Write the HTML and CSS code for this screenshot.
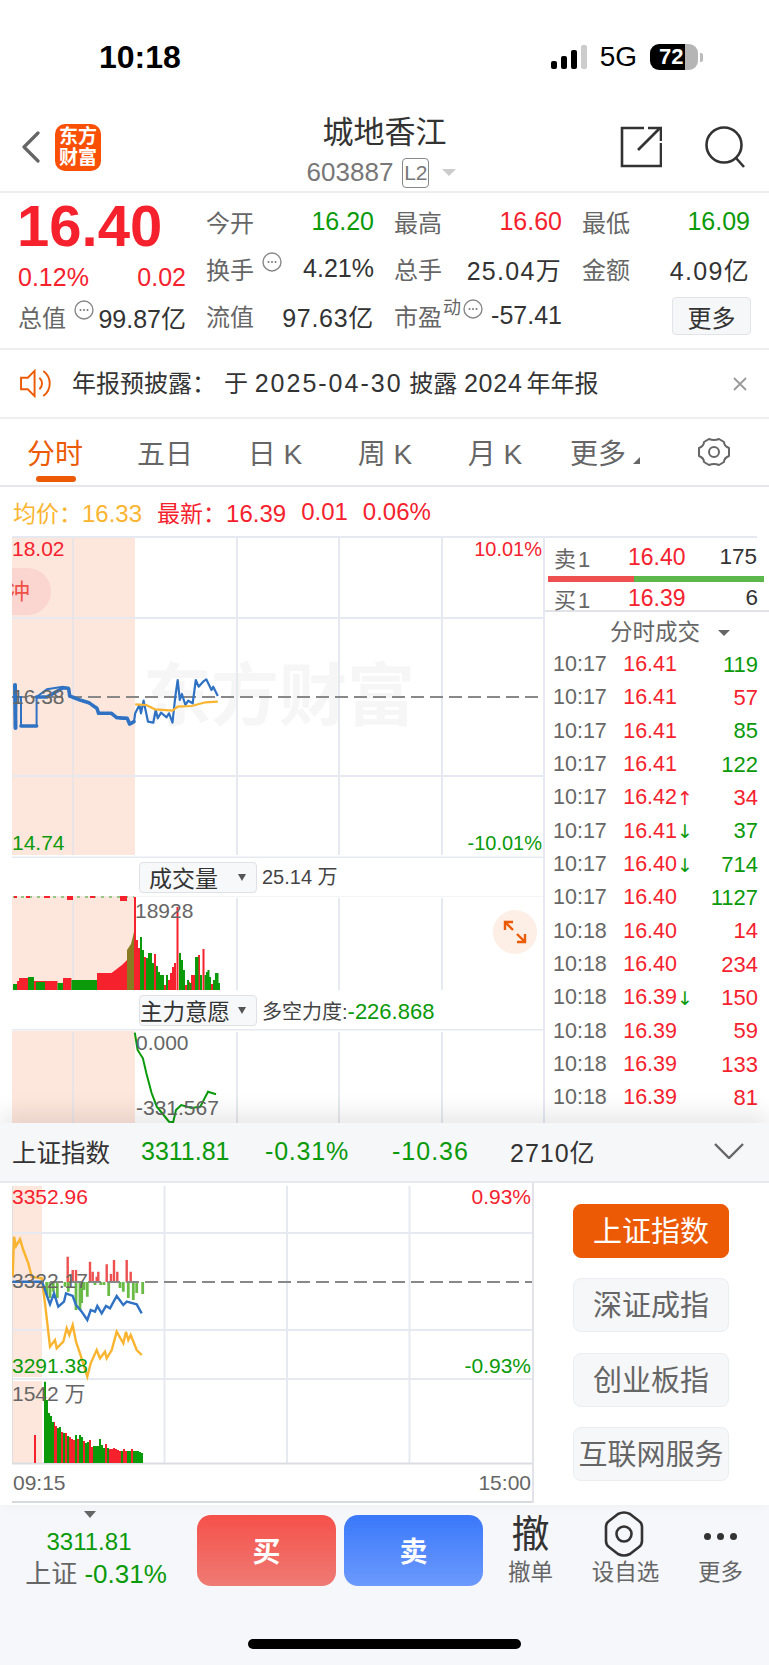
FILE: index.html
```html
<!DOCTYPE html>
<html lang="zh-CN">
<head>
    <meta charset="UTF-8">
    <meta name="viewport" content="width=device-width, initial-scale=1.0">
    <title>城地香江</title>
    <link rel="stylesheet" href="styles.css">
</head>
<body>
    <svg class="defs" width="0" height="0">
        <symbol id="more-dots" viewBox="0 0 20 20">
            <circle cx="10" cy="10" r="9" fill="none" stroke="#888" stroke-width="1.4"/>
            <circle cx="6.5" cy="10" r="1" fill="#777"/>
            <circle cx="10" cy="10" r="1" fill="#777"/>
            <circle cx="13.5" cy="10" r="1" fill="#777"/>
        </symbol>
    </svg>

    <!-- Status bar -->
    <div class="status-bar">
        <span class="clock">10:18</span>
        <div class="status-right">
            <div class="signal">
                <i class="s1"></i><i class="s2"></i><i class="s3"></i><i class="s4"></i>
            </div>
            <span class="net">5G</span>
            <div class="battery"><span>72</span></div>
            <i class="battery-nub"></i>
        </div>
    </div>

    <!-- Header -->
    <div class="nav">
        <div class="nav-left">
            <svg class="back" viewBox="0 0 20 32"><path d="M17 2 L3 16 L17 30" fill="none" stroke="#666" stroke-width="3.2" stroke-linecap="round" stroke-linejoin="round"/></svg>
            <div class="logo">东方<br>财富</div>
        </div>
        <div class="nav-title">
            <div class="stock-name">城地香江</div>
            <div class="stock-code">603887<span class="l2">L2</span><i class="code-arrow"></i></div>
        </div>
        <div class="nav-right">
            <svg class="nav-icon" viewBox="0 0 42 42" fill="none" stroke="#333" stroke-width="2.6"><path d="M24 2 H2 V40 H41 V17"/><path d="M18 24 L40 2"/><path d="M28 2 H41 V15"/></svg>
            <svg class="nav-icon" viewBox="0 0 42 42" fill="none" stroke="#333" stroke-width="2.6"><circle cx="20" cy="19" r="17.5"/><path d="M32 32 L40 41"/></svg>
        </div>
    </div>

    <!-- Quote -->
    <div class="quote">
        <div class="quote-main">
            <div class="last-price">16.40</div>
            <div class="change-row"><span>0.12%</span><span>0.02</span></div>
            <div class="cap-row">
                <span class="lbl">总值</span><svg class="dots"><use href="#more-dots"/></svg><span class="val">99.87亿</span>
            </div>
        </div>
        <div class="stats">
            <div class="stat"><span class="lbl">今开</span><span class="down">16.20</span></div>
            <div class="stat"><span class="lbl">最高</span><span class="up">16.60</span></div>
            <div class="stat"><span class="lbl">最低</span><span class="down">16.09</span></div>
            <div class="stat"><span class="lbl">换手<svg class="dots"><use href="#more-dots"/></svg></span><span class="val">4.21%</span></div>
            <div class="stat"><span class="lbl">总手</span><span class="val wide">25.04万</span></div>
            <div class="stat"><span class="lbl">金额</span><span class="val wide">4.09亿</span></div>
            <div class="stat"><span class="lbl">流值</span><span class="val wide-s">97.63亿</span></div>
            <div class="stat"><span class="lbl">市盈<sup class="dyn">动</sup><svg class="dots"><use href="#more-dots"/></svg></span><span class="val">-57.41</span></div>
            <div class="stat stat-end"><button class="more-btn">更多</button></div>
        </div>
    </div>

    <!-- Notice -->
    <div class="notice">
        <svg class="speaker" viewBox="0 0 34 30" fill="none" stroke="#ec5a05" stroke-width="2"><path d="M1 9 H8 L15 2 V28 L8 21 H1 Z"/><path d="M20 9 a8 8 0 0 1 0 12"/><path d="M24 2 a16 16 0 0 1 0 26"/></svg>
        <div class="notice-text">年报预披露：<span class="notice-yu">于</span> <span class="num">2025-04-30</span> 披露 <span class="num-s">2024</span> 年年报</div>
        <svg class="close" viewBox="0 0 16 16" stroke="#999" stroke-width="1.8"><path d="M2 2 L14 14 M14 2 L2 14"/></svg>
    </div>

    <!-- Period tabs -->
    <div class="tabs">
        <div class="tab active">分时</div>
        <div class="tab">五日</div>
        <div class="tab">日 K</div>
        <div class="tab">周 K</div>
        <div class="tab">月 K</div>
        <div class="tab tab-more">更多<i></i></div>
        <div class="tab">
            <svg class="gear" viewBox="0 0 32 30" fill="none" stroke="#666" stroke-width="2" stroke-linejoin="round"><path d="M11 2 Q16 4 21 2 L26 5 Q26 9 31 11 V19 Q26 21 26 25 L21 28 Q16 26 11 28 L6 25 Q6 21 1 19 V11 Q6 9 6 5 Z"/><circle cx="16" cy="15" r="5"/></svg>
        </div>
    </div>

    <div class="avg-row">
        <span class="avg"><span class="avg-lbl">均价：</span>16.33</span>
        <span class="up"><span class="avg-lbl">最新：</span>16.39</span>
        <span class="up">0.01</span>
        <span class="up">0.06%</span>
    </div>

    <!-- Intraday section -->
    <div class="market">
        <div class="chart-col">
            <div class="chart price-chart">
                <div class="watermark">东方财富</div>
                <svg viewBox="12 536 531 322" width="531" height="322">
                    <rect x="12" y="538" width="123" height="317" fill="#fde6dc"/>
                    <g stroke="#e7e9f0" stroke-width="2">
                        <path d="M12 537 H543 M12 618 H543 M12 776 H543 M12 857.5 H543"/>
                        <path d="M237 538 V855 M339 538 V855 M442 538 V855"/>
                        <path d="M73 538 V855" stroke="#ece4e4"/>
                    </g>
                    <path d="M12 697 H543" stroke="#888" stroke-width="2" stroke-dasharray="13 6"/>
                    <path d="M15 685 L15.5 728" fill="none" stroke="#2f72c4" stroke-width="4" stroke-linecap="round"/>
                    <path d="M15 685 L15.7 728 L16.4 697 H21 V726 H36.6 V697 L47 689.3 L62.7 686.7 L68.6 688.3 L69.7 696 L80 700 L88.9 702.7 L96.9 708.3 L98.6 713.3 H111.5 L116.7 717.7 L127.2 718.3 L129.6 724 L134 721.7" fill="none" stroke="#2f72c4" stroke-width="2"/>
                    <path d="M36.6 697 H47 L62.7 688 L68.6 688.3 L69.7 696 L80 700 L88.9 702.7 L96.9 708.3 L98.6 713.3 H111.5 L116.7 717.7 L127.2 718.3 L129.6 724 L134 721.7 M21 726 H36.6" fill="none" stroke="#2f72c4" stroke-width="3.6" stroke-linejoin="round" stroke-linecap="round" stroke-dasharray="4 1"/>
                    <path d="M134 721.7 L135.2 713.3 L139.4 705 L141 713.3 L143.6 700.7 L148 721.7 L153.3 722.7 L155.7 710 L157.8 718.3 L161 712.7 L166.6 717.3 L169 713.3 L172.5 722.7 L175.3 696.7 L177.7 680 L179.8 700 L181.9 694 L185.4 705 L188.2 700.7 L192.7 703.3 L195.8 680 L198.6 686.7 L203.1 681.7 L206.3 679.3 L211.5 690 L213.2 686.7 L217.8 696" fill="none" stroke="#2f72c4" stroke-width="2.2" stroke-linejoin="round"/>
                    <path d="M135.2 704.3 L146.3 705 L155 709.3 L172.5 710.7 L177.7 706.7 L191.6 706 L205.6 702.3 L217.8 701.7" fill="none" stroke="#fbb430" stroke-width="2.2"/>
                </svg>
                <span class="tag up tl">18.02</span>
                <span class="tag up tr">10.01%</span>
                <span class="tag mid-label">16.38</span>
                <span class="tag down bl">14.74</span>
                <span class="tag down br">-10.01%</span>
                <div class="auction-pill"><span>冲</span></div>
            </div>

            <div class="sub-head">
                <div class="sel-btn">成交量<i></i></div>
                <span class="sub-val vol-val">25.14 万</span>
            </div>
            <div class="chart vol-chart">
                <svg viewBox="12 896 531 95" width="531" height="95">
                    <rect x="12" y="896" width="123" height="94" fill="#fde6dc"/>
                    <g stroke="#e7e9f0" stroke-width="2">
                        <path d="M12 895.5 H543"/>
                        <path d="M237 898 V990 M339 898 V990 M442 898 V990"/>
                        <path d="M73 898 V990" stroke="#ece4e4"/>
                    </g>
                    <path d="M13 897 H134" stroke="#36a52f" stroke-width="1" stroke-dasharray="3 5"/>
                    <path d="M14 896 h3 v2 h-3z M26 896 h4 v2 h-4z M44 896 h6 v2 h-6z M67 896 h6 v4 h-6z M90 896 h5 v2 h-5z M120 896 h7 v5 h-7z" fill="#f5222d"/>
                    <!-- left block before open -->
                    <path d="M17 990 V981 H19 V978 H28 V990 Z M34 990 V981 H57.5 V990 Z M63 990 V978 H71.4 V990 Z M97 990 V973 H111.5 L122 965 V990 Z M122 990 V965 L127 960 V990 Z" fill="#f5222d"/>
                    <path d="M13 990 V984 H17 V990 Z M28 990 V977 H34 V990 Z M36 990 V982 H45 V990 Z M57.5 990 V983 H63 V990 Z M71.4 990 V980 H97 V990 Z" fill="#0a9a0a"/>
                    <path d="M127 990 V950 L131 944 L134 932 V990 Z" fill="#8a7a20"/>
                    <path d="M135 897 V990 M137 940 V990 M139 948 V990 M145 957 V990 M155 954 V990 M165 985 V990 M169 980 V990 M171 973 V990 M173 967 V990 M175 963 V990 M177.5 907 V990 M186 985 V990 M189 982 V990 M192 975 V990 M194 975 V990 M199 955 V990 M203.5 949 V990 M212 984 V990" stroke="#f5222d" stroke-width="2" fill="none"/>
                    <path d="M141 937 V990 M143 950 V990 M147 958 V990 M149 953 V990 M151 953 V990 M153 963 V990 M157 966 V990 M159 972 V990 M161 975 V990 M163 975 V990 M167 975 V990 M180 953 V990 M182 960 V990 M184 970 V990 M188 980 V990 M190.5 983 V990 M196 957 V990 M197.5 957 V990 M201 975 V990 M205.5 975 V990 M207 972 V990 M208.5 970 V990 M210 977 V990 M214 980 V990 M216 973 V990 M217.5 973 V990 M219 983 V990" stroke="#0a9a0a" stroke-width="2" fill="none"/>
                </svg>
                <span class="tag vol-max">18928</span>
                <div class="expand-btn">
                    <svg viewBox="0 0 26 26" fill="none" stroke="#ec5a05" stroke-width="2.4"><path d="M3 11 V3 H11 M3 3 L11 11"/><path d="M23 15 V23 H15 M23 23 L15 15"/></svg>
                </div>
            </div>

            <div class="sub-head">
                <div class="sel-btn sel-tight">主力意愿<i></i></div>
                <span class="sub-val">多空力度:<span class="down sub-num">-226.868</span></span>
            </div>
            <div class="chart intent-chart">
                <svg viewBox="12 1029 531 94" width="531" height="94">
                    <rect x="12" y="1031" width="123" height="92" fill="#fde6dc"/>
                    <g stroke="#e7e9f0" stroke-width="2">
                        <path d="M12 1029.5 H543"/>
                        <path d="M237 1032 V1123 M339 1032 V1123 M442 1032 V1123"/>
                        <path d="M73 1032 V1123" stroke="#ece4e4"/>
                    </g>
                    <path d="M134.8 1032.7 L137.6 1050 L142.9 1058.3 L146.3 1073 L151.6 1093 L156.8 1106.7 L162 1113 L169 1121.7 L173.2 1122 L176 1110 L181.2 1105 L191.6 1108 L200.3 1106.7 L208 1091.7 L216 1094.3" fill="none" stroke="#0a9a0a" stroke-width="2"/>
                </svg>
                <span class="tag intent-top">0.000</span>
                <span class="tag intent-low">-331.567</span>
            </div>
        </div>

        <div class="side-col">
            <div class="book-row book-ask">
                <span class="book-lbl">卖1</span><span class="up book-price">16.40</span><span class="book-qty">175</span>
            </div>
            <div class="book-bar"><i class="bar-red"></i><i class="bar-green"></i></div>
            <div class="book-row book-bid">
                <span class="book-lbl">买1</span><span class="up book-price">16.39</span><span class="book-qty">6</span>
            </div>
            <div class="trade-head">分时成交<i></i></div>
            <div class="trades">
                <div class="trade"><span class="t">10:17</span><span class="p">16.41</span><span class="a"></span><span class="q down">119</span></div>
                <div class="trade"><span class="t">10:17</span><span class="p">16.41</span><span class="a"></span><span class="q up">57</span></div>
                <div class="trade"><span class="t">10:17</span><span class="p">16.41</span><span class="a"></span><span class="q down">85</span></div>
                <div class="trade"><span class="t">10:17</span><span class="p">16.41</span><span class="a"></span><span class="q down">122</span></div>
                <div class="trade"><span class="t">10:17</span><span class="p">16.42</span><span class="a up">↑</span><span class="q up">34</span></div>
                <div class="trade"><span class="t">10:17</span><span class="p">16.41</span><span class="a down">↓</span><span class="q down">37</span></div>
                <div class="trade"><span class="t">10:17</span><span class="p">16.40</span><span class="a down">↓</span><span class="q down">714</span></div>
                <div class="trade"><span class="t">10:17</span><span class="p">16.40</span><span class="a"></span><span class="q down">1127</span></div>
                <div class="trade"><span class="t">10:18</span><span class="p">16.40</span><span class="a"></span><span class="q up">14</span></div>
                <div class="trade"><span class="t">10:18</span><span class="p">16.40</span><span class="a"></span><span class="q up">234</span></div>
                <div class="trade"><span class="t">10:18</span><span class="p">16.39</span><span class="a down">↓</span><span class="q up">150</span></div>
                <div class="trade"><span class="t">10:18</span><span class="p">16.39</span><span class="a"></span><span class="q up">59</span></div>
                <div class="trade"><span class="t">10:18</span><span class="p">16.39</span><span class="a"></span><span class="q up">133</span></div>
                <div class="trade"><span class="t">10:18</span><span class="p">16.39</span><span class="a"></span><span class="q up">81</span></div>
            </div>
        </div>
    </div>

    <!-- Index panel -->
    <div class="index-panel">
        <div class="index-head">
            <span class="index-name">上证指数</span>
            <span class="down idx-a">3311.81</span>
            <span class="down idx-b">-0.31%</span>
            <span class="down idx-c">-10.36</span>
            <span class="idx-d">2710亿</span>
            <svg class="chevron" viewBox="0 0 30 16" fill="none" stroke="#666" stroke-width="2.4"><path d="M1 1 L15 15 L29 1"/></svg>
        </div>
        <div class="index-body">
            <div class="chart index-chart">
                <svg viewBox="12 1183 520 320" width="520" height="320">
                    <rect x="12" y="1186" width="30" height="191" fill="#fde6dc"/>
                    <rect x="12" y="1381" width="30" height="82" fill="#fde6dc"/>
                    <g stroke="#e7e9f0" stroke-width="2">
                        <path d="M164.5 1186 V1463 M287 1186 V1463 M409.5 1186 V1463"/>
                        <path d="M12 1233 H532 M12 1330 H532 M12 1379 H532"/>
                    </g>
                    <path d="M12.5 1186 V1463" stroke="#e3dede" stroke-width="1"/>
                    <path d="M12 1463.5 H532" stroke="#dcdde2" stroke-width="2"/>
                    <path d="M12 1502 H532" stroke="#d8d9de" stroke-width="2"/>
                    <path d="M67.7 1282 V1256.7 M72.7 1282 V1270 M76 1282 V1270 M90 1282 V1261.7 M92.7 1282 V1271.7 M96.7 1282 V1276.7 M98.3 1282 V1271.7 M106.7 1282 V1264.3 M111 1282 V1274 M114 1282 V1260 M117.3 1282 V1271.7 M126.7 1282 V1260 M130.7 1282 V1271.7" stroke="#ee5050" stroke-width="2.4"/>
                    <path d="M46.7 1282 V1295 M50 1282 V1298 M53.3 1282 V1291.7 M57.3 1282 V1298 M65 1282 V1286.7 M68.3 1282 V1291.7 M76 1282 V1310 M80 1282 V1310 M81.7 1282 V1303 M84 1282 V1290 M87.3 1282 V1296.7 M95 1282 V1285 M100.7 1282 V1285 M104 1282 V1285 M108.7 1282 V1296 M120 1282 V1288 M123.3 1282 V1291.7 M128.3 1282 V1298 M133.3 1282 V1300 M136.7 1282 V1293 M142.7 1282 V1294" stroke="#6abb46" stroke-width="2.8"/>
                    <path d="M12 1282 H532" stroke="#888" stroke-width="2" stroke-dasharray="13 6"/>
                    <path d="M12.7 1276.7 L14 1236.7 L16 1246 L20 1239.3 L23.3 1250 L28.3 1263.3 L31.7 1276.7 L41.7 1278.3 L45 1303.3 L50 1346.7 L55 1340 L56.7 1348.3 L63.3 1341.7 L66.7 1328.3 L69.3 1335 L72.7 1325 L76 1341.7 L80 1353.3 L87.3 1376.7 L90.7 1363.3 L96.7 1350 L100 1358.3 L105 1351.7 L106.7 1358.3 L111.7 1350 L116.7 1331.7 L123.3 1343.3 L126 1331.7 L128.3 1340 L130.7 1335 L136.7 1350 L141.7 1355" fill="none" stroke="#fbb430" stroke-width="2.4"/>
                    <path d="M12.7 1281.7 H41.7 L43.3 1285 L46.7 1295 L50 1304.3 L54 1293.3 L58.3 1306.7 L64 1301.7 L66 1293.3 L72.7 1296 L76 1305 L81.7 1311.7 L87.3 1320 L90.7 1310 L95 1311.7 L97.3 1306 L101.7 1313.3 L106 1306 L110 1308.3 L116.7 1296 L123.3 1305 L126.7 1301.7 L136.7 1304.3 L141.7 1313.3" fill="none" stroke="#2f72c4" stroke-width="2.4"/>
                    <path d="M35 1463 V1435 M54 1463 V1422 M56 1463 V1426 M62 1463 V1432 M66 1463 V1433 M70 1463 V1437 M72 1463 V1439 M74 1463 V1440 M78 1463 V1439 M84 1463 V1441 M90 1463 V1440 M92 1463 V1447 M106 1463 V1444 M110 1463 V1449 M112 1463 V1449 M114 1463 V1448 M116 1463 V1449 M118 1463 V1450 M120 1463 V1451 M124 1463 V1449 M126 1463 V1451 M132 1463 V1449" stroke="#f5222d" stroke-width="2"/>
                    <path d="M45 1463 V1381.7 M47 1463 V1400 M49 1463 V1413 M51 1463 V1416 M53 1463 V1422 M58 1463 V1428 M60 1463 V1427 M64 1463 V1433 M68 1463 V1436 M76 1463 V1435 M80 1463 V1435 M82 1463 V1437 M86 1463 V1443 M88 1463 V1442 M94 1463 V1446 M96 1463 V1446 M98 1463 V1446 M100 1463 V1439 M102 1463 V1445 M104 1463 V1448 M108 1463 V1448 M122 1463 V1451 M128 1463 V1451 M130 1463 V1451 M134 1463 V1451 M136 1463 V1451 M138 1463 V1451 M140 1463 V1452 M142 1463 V1453" stroke="#0a9a0a" stroke-width="2"/>
                </svg>
                <span class="tag up idx-high">3352.96</span>
                <span class="tag up idx-high-pct">0.93%</span>
                <span class="tag idx-mid">3322.17</span>
                <span class="tag down idx-low">3291.38</span>
                <span class="tag down idx-low-pct">-0.93%</span>
                <span class="tag idx-vol">1542 万</span>
                <span class="tag idx-start">09:15</span>
                <span class="tag idx-end">15:00</span>
            </div>
            <div class="index-btns">
                <div class="idx-btn active">上证指数</div>
                <div class="idx-btn">深证成指</div>
                <div class="idx-btn">创业板指</div>
                <div class="idx-btn">互联网服务</div>
            </div>
        </div>
    </div>

    <!-- Bottom bar -->
    <div class="bottom">
        <div class="bottom-row">
            <div class="mini-quote">
                <i class="mini-arrow"></i>
                <div class="down mini-price">3311.81</div>
                <div class="mini-line"><span class="mini-name">上证</span> <span class="down">-0.31%</span></div>
            </div>
            <div class="trade-btn buy">买</div>
            <div class="trade-btn sell">卖</div>
            <div class="action">
                <div class="action-top cancel">撤</div>
                <div class="action-lbl">撤单</div>
            </div>
            <div class="action">
                <div class="action-top">
                    <svg class="hex" viewBox="0 0 40 46" fill="none" stroke="#333" stroke-width="2.6" stroke-linejoin="round"><path d="M14 3 Q20 0 26 3 L35 10 Q38 12 38 16 V30 Q38 34 35 36 L26 43 Q20 46 14 43 L5 36 Q2 34 2 30 V16 Q2 12 5 10 Z"/><circle cx="20" cy="23" r="7.5"/></svg>
                </div>
                <div class="action-lbl">设自选</div>
            </div>
            <div class="action">
                <div class="action-top dots-row"><i></i><i></i><i></i></div>
                <div class="action-lbl">更多</div>
            </div>
        </div>
        <div class="home-bar"></div>
    </div>
</body>
</html>
```

FILE: styles.css
```css
* {
    box-sizing: border-box;
}

body {
    margin: 0;
    width: 769px;
    height: 1665px;
    overflow: hidden;
    background: white;
    color: #333;
    font-family: "Liberation Sans", "Noto Sans CJK SC", sans-serif;
}

i {
    display: block;
}

.defs {
    position: absolute;
}

.up {
    color: #f5222d;
}

.down {
    color: #0a9a0a;
}

/* Status bar */
.status-bar {
    height: 100px;
    padding: 41px 0 0 99px;
    display: flex;
    justify-content: space-between;
    align-items: flex-start;
}

.clock {
    font-size: 32px;
    line-height: 32px;
    font-weight: bold;
    color: #000;
}

.status-right {
    display: flex;
    align-items: center;
    height: 32px;
    padding-right: 66px;
}

.signal {
    display: flex;
    align-items: flex-end;
    gap: 4px;
    height: 24px;
}

.signal i {
    width: 6px;
    background: #000;
    border-radius: 2px;
}

.s1 { height: 8px; }
.s2 { height: 13px; }
.s3 { height: 19px; }
.signal .s4 { height: 24px; background: #ccc; }

.net {
    margin-left: 13px;
    font-size: 28px;
    color: #000;
}

.battery {
    margin-left: 13px;
    width: 48px;
    height: 26px;
    border-radius: 9px;
    background: linear-gradient(90deg, #000 72%, #b5b5b5 72%);
    color: white;
    font-size: 22px;
    font-weight: bold;
    line-height: 26px;
    padding-left: 9px;
}

.battery-nub {
    width: 3px;
    height: 9px;
    margin-left: 2px;
    background: #bbb;
    border-radius: 0 2px 2px 0;
}

/* Header */
.nav {
    height: 93px;
    display: grid;
    grid-template-columns: 1fr auto 1fr;
    border-bottom: 2px solid #eeeeee;
}

.nav-left {
    display: flex;
    align-items: center;
    padding-left: 21px;
    padding-top: 2px;
}

.back {
    width: 20px;
    height: 32px;
}

.logo {
    margin-left: 14px;
    width: 46px;
    height: 47px;
    background: #fa5006;
    border-radius: 10px;
    color: white;
    font-size: 19px;
    font-weight: bold;
    line-height: 21px;
    text-align: center;
    padding-top: 2px;
}

.nav-title {
    text-align: center;
    padding-top: 13px;
}

.stock-name {
    font-size: 31px;
    line-height: 40px;
    color: #333;
}

.stock-code {
    display: flex;
    align-items: center;
    justify-content: center;
    height: 39px;
    padding-right: 6px;
    font-size: 26px;
    color: #777;
}

.l2 {
    margin-left: 9px;
    width: 27px;
    height: 30px;
    border: 1px solid #888;
    border-radius: 4px;
    font-size: 21px;
    line-height: 28px;
    text-align: center;
}

.code-arrow {
    margin-left: 13px;
    border-style: solid;
    border-width: 7px 7px 0;
    border-color: #ccc transparent transparent;
}

.nav-right {
    display: flex;
    justify-content: flex-end;
    align-items: center;
    gap: 42px;
    padding-right: 23px;
    padding-top: 2px;
}

.nav-icon {
    width: 42px;
    height: 42px;
}

/* Quote */
.quote {
    height: 157px;
    padding-left: 18px;
    display: flex;
    gap: 20px;
    border-bottom: 2px solid #eeeeee;
}

.quote-main {
    width: 168px;
}

.last-price {
    height: 65px;
    margin-left: -1px;
    line-height: 65px;
    font-size: 58px;
    font-weight: bold;
    color: #f5222d;
}

.change-row {
    display: flex;
    justify-content: space-between;
    height: 38px;
    line-height: 38px;
    font-size: 25px;
    color: #f5222d;
}

.cap-row {
    display: flex;
    align-items: center;
    height: 41px;
    font-size: 24px;
}

.cap-row .val {
    margin-left: auto;
    font-size: 25px;
    white-space: nowrap;
}

.lbl {
    display: flex;
    align-items: center;
    font-size: 24px;
    color: #666;
    white-space: nowrap;
}

.val {
    color: #333;
}

.wide {
    letter-spacing: 1.3px;
}

.wide-s {
    letter-spacing: 0.7px;
}

.dots {
    width: 20px;
    height: 20px;
    margin: -14px 0 0 8px;
    flex-shrink: 0;
}

.cap-row .dots {
    width: 20px;
    margin-left: 8px;
}

.dyn {
    font-size: 18px;
    line-height: 18px;
    margin: -16px 0 0 1px;
}

.dyn + .dots {
    margin-left: 2px;
}

.stats {
    display: grid;
    grid-template-columns: repeat(3, 168px);
    grid-auto-rows: 47px;
    column-gap: 20px;
    padding-top: 5px;
}

.stat {
    display: flex;
    justify-content: space-between;
    align-items: center;
    font-size: 25px;
    white-space: nowrap;
}

.stat-end {
    justify-content: flex-end;
}

.more-btn {
    width: 79px;
    height: 38px;
    padding: 0;
    margin-top: 1px;
    margin-right: -1px;
    background: #f6f7f9;
    border: 1px solid #e3e4e8;
    border-radius: 4px;
    font-family: inherit;
    font-size: 24px;
    color: #333;
}

/* Notice */
.notice {
    height: 69px;
    display: flex;
    align-items: center;
    padding-left: 20px;
    border-bottom: 2px solid #eeeeee;
}

.speaker {
    width: 33px;
    height: 29px;
}

.notice-text {
    margin: -4px 0 0 19px;
    font-size: 24px;
    color: #333;
    white-space: nowrap;
}

.notice-yu {
    margin-left: 8px;
}

.num {
    font-size: 25px;
    letter-spacing: 2px;
}

.num-s {
    font-size: 25px;
    letter-spacing: 0.8px;
    margin-right: -3px;
}

.close {
    width: 16px;
    height: 16px;
    margin-left: auto;
    margin-right: 21px;
}

/* Tabs */
.tabs {
    height: 68px;
    display: flex;
    border-bottom: 2px solid #e6e6ec;
}

.tab {
    position: relative;
    width: 110px;
    flex-shrink: 0;
    height: 66px;
    padding-top: 16px;
    text-align: center;
    font-size: 28px;
    line-height: 40px;
    color: #666;
    white-space: nowrap;
}

.tab.active {
    color: #ec5a05;
}

.tab.active::after {
    content: "";
    position: absolute;
    left: 36px;
    top: 57px;
    width: 40px;
    height: 6px;
    border-radius: 3px;
    background: #ec5a05;
}

.tab-more i {
    display: inline-block;
    margin-left: 7px;
    border-style: solid;
    border-width: 0 0 7px 7px;
    border-color: transparent transparent #666;
}

.gear {
    width: 32px;
    height: 30px;
    margin-top: 2px;
    margin-left: -3px;
}

.avg-row {
    height: 49px;
    padding: 0 0 0 13px;
    display: flex;
    align-items: center;
    gap: 15px;
    font-size: 24px;
}

.avg-lbl {
    font-size: 23px;
}

.avg {
    color: #fbb430;
}

/* Intraday section */
.market {
    height: 587px;
    padding-left: 12px;
    display: flex;
}

.chart-col {
    width: 531px;
    flex-shrink: 0;
}

.chart {
    position: relative;
    overflow: hidden;
}

.chart svg {
    display: block;
}

.price-chart {
    height: 322px;
}

.vol-chart {
    height: 95px;
}

.intent-chart {
    height: 94px;
}

.watermark {
    position: absolute;
    left: 131px;
    top: 120px;
    font-size: 68px;
    line-height: 80px;
    font-weight: bold;
    color: #f6f6f6;
    white-space: nowrap;
}

.price-chart svg {
    position: relative;
}

.tag {
    position: absolute;
    font-size: 21px;
    line-height: 24px;
    color: #666;
    white-space: nowrap;
}

.tag.up {
    color: #f5222d;
}

.tag.down {
    color: #0a9a0a;
}

.tl { left: 0; top: 1px; }
.tr { right: 1px; top: 1px; font-size: 20px; }
.bl { left: 0; top: 295px; }
.br { right: 1px; top: 295px; font-size: 20px; }
.mid-label { left: 0; top: 149px; }

.auction-pill {
    position: absolute;
    left: 0;
    top: 32px;
    width: 39px;
    height: 47px;
    overflow: hidden;
    border-radius: 0 24px 24px 0;
    background: #fbd5cf;
    color: #ef5048;
    font-size: 22px;
    line-height: 47px;
}

.auction-pill span {
    display: block;
    margin-left: -4px;
}

.sub-head {
    height: 38px;
    display: flex;
    align-items: center;
    padding-left: 127px;
}

.sel-btn {
    width: 118px;
    height: 31px;
    display: flex;
    align-items: center;
    flex-shrink: 0;
    background: #f7f8fa;
    border: 1px solid #dfe1e6;
    border-radius: 4px;
    font-size: 23px;
    color: #333;
    padding-left: 9px;
    white-space: nowrap;
}

.sel-btn i {
    margin-left: auto;
    margin-right: 10px;
    border-style: solid;
    border-width: 7px 4px 0;
    border-color: #555 transparent transparent;
}

.sel-tight {
    padding-left: 0;
    font-size: 22.5px;
}

.sub-val {
    margin-left: 5px;
    font-size: 20px;
    color: #444;
    white-space: nowrap;
}

.vol-val {
    margin-top: -3px;
}

.sub-num {
    font-size: 22px;
}

.vol-max { left: 123px; top: 3px; }
.intent-top { left: 124px; top: 2px; }
.intent-low { left: 124px; top: 67px; }

.expand-btn {
    position: absolute;
    left: 481px;
    top: 14px;
    width: 44px;
    height: 44px;
    border-radius: 50%;
    background: #fdeee6;
    padding: 9px;
}

.expand-btn svg {
    width: 26px;
    height: 26px;
}

/* Order book and trades */
.side-col {
    flex: 1;
    border-left: 2px solid #e7e9f0;
}

.book-row {
    display: grid;
    grid-template-columns: 74px 58px 1fr;
    padding: 0 11px 0 9px;
    font-size: 23px;
    align-items: center;
}

.book-ask {
    height: 40px;
    border-top: 2px solid #e7e9f0;
    margin-right: 12px;
    padding-right: 0;
}

.book-bid {
    height: 30px;
    border-bottom: 2px solid #e2e3e8;
}

.book-lbl {
    color: #666;
    font-size: 22px;
    letter-spacing: 2px;
}

.book-price {
    white-space: nowrap;
}

.book-qty {
    text-align: right;
    color: #333;
    font-size: 22.5px;
}

.book-bar {
    display: flex;
    height: 6px;
    margin: 0 5px 0 3px;
}

.bar-red {
    width: 86px;
    background: #ee5050;
}

.bar-green {
    flex: 1;
    background: #5cb84a;
}

.trade-head {
    height: 36px;
    padding: 5px 0 0 65px;
    display: flex;
    align-items: center;
    font-size: 22.5px;
    line-height: 30px;
    color: #666;
}

.trade-head i {
    margin-left: 18px;
    border-style: solid;
    border-width: 6px 6px 0;
    border-color: #666 transparent transparent;
}

.trade {
    display: grid;
    grid-template-columns: 60px 64px 16px 1fr;
    height: 33.33px;
    padding: 0 11px 0 8px;
    align-items: center;
    font-size: 21.5px;
}

.trade .t {
    color: #666;
}

.trade .p {
    text-align: right;
    color: #f5222d;
    font-size: 21.5px;
}

.trade .a {
    font-family: "DejaVu Sans", sans-serif;
    font-size: 19px;
    line-height: 20px;
    white-space: nowrap;
}

.trade .q {
    text-align: right;
    font-size: 22px;
}

/* Index panel */
.index-panel {
    position: relative;
    z-index: 1;
    height: 382px;
    background: white;
    box-shadow: 0 -10px 22px rgba(0, 0, 0, 0.09);
}

.index-head {
    height: 60px;
    display: flex;
    align-items: center;
    background: #f6f7f9;
    border-bottom: 2px solid #e8e9ee;
    padding: 0 0 2px 12px;
    font-size: 25px;
    white-space: nowrap;
}

.index-name {
    width: 129px;
    font-size: 24.5px;
}

.idx-a { width: 124px; }
.idx-b { width: 127px; letter-spacing: 0.8px; }
.idx-c { width: 118px; letter-spacing: 1px; }
.idx-d { letter-spacing: 1px; }

.chevron {
    width: 30px;
    height: 16px;
    margin-left: auto;
    margin-right: 25px;
}

.index-body {
    display: flex;
    padding-left: 12px;
}

.index-chart {
    width: 520px;
    height: 320px;
    flex-shrink: 0;
}

.idx-high { left: 0; top: 2px; }
.idx-high-pct { right: 1px; top: 2px; }
.idx-mid { left: 0; top: 86px; }
.idx-low { left: 0; top: 171px; }
.idx-low-pct { right: 1px; top: 171px; }
.idx-vol { left: 0; top: 199px; }
.idx-start { left: 1px; top: 288px; }
.idx-end { right: 1px; top: 288px; }

.index-btns {
    flex: 1;
    border-left: 2px solid #e2e3ea;
    padding: 21px 0 0 39px;
    display: flex;
    flex-direction: column;
    gap: 20.3px;
}

.idx-btn {
    width: 156px;
    height: 54px;
    background: #f6f7f9;
    border: 1px solid #ecedf0;
    border-radius: 8px;
    color: #666;
    font-size: 29px;
    line-height: 55px;
    text-align: center;
    white-space: nowrap;
}

.idx-btn.active {
    background: #ec5a05;
    border-color: #ec5a05;
    color: white;
}

/* Bottom bar */
.bottom {
    height: 160px;
    background: #f6f7fb;
}

.bottom-row {
    height: 134px;
    display: flex;
    align-items: flex-start;
}

.mini-quote {
    width: 190px;
    padding-left: 2px;
    text-align: center;
    flex-shrink: 0;
}

.mini-arrow {
    width: 0;
    margin: 6px auto 0;
    transform: translateX(-6px);
    border-style: solid;
    border-width: 7px 6px 0;
    border-color: #666 transparent transparent;
}

.mini-price {
    margin-top: 6px;
    font-size: 24px;
    line-height: 36px;
    transform: translateX(-7px);
}

.mini-line {
    margin-top: -4px;
    font-size: 26px;
    line-height: 36px;
    white-space: nowrap;
}

.mini-name {
    font-size: 26px;
    color: #666;
}

.trade-btn {
    width: 139px;
    height: 71px;
    margin-top: 10px;
    border-radius: 14px;
    color: white;
    font-size: 28px;
    font-weight: bold;
    line-height: 75px;
    text-align: center;
    flex-shrink: 0;
}

.buy {
    margin-left: 7px;
    background: linear-gradient(#f5514a, #ef7a74);
}

.sell {
    margin-left: 8px;
    background: linear-gradient(#3a78fa, #6c9afd);
}

.action {
    width: 95px;
    text-align: center;
    flex-shrink: 0;
}

.action-top {
    height: 52px;
    padding-top: 6px;
}

.cancel {
    font-size: 38px;
    line-height: 46px;
    color: #333;
}

.hex {
    width: 40px;
    height: 46px;
    transform: translateX(-2px);
}

.dots-row {
    display: flex;
    justify-content: center;
    align-items: center;
    gap: 6px;
    height: 56px;
    margin-bottom: -4px;
}

.dots-row i {
    width: 7px;
    height: 7px;
    border-radius: 50%;
    background: #333;
}

.action-lbl {
    font-size: 22.5px;
    line-height: 32px;
    color: #666;
    white-space: nowrap;
}

.home-bar {
    width: 273px;
    height: 10px;
    margin-left: 248px;
    border-radius: 5px;
    background: #000;
}
```
